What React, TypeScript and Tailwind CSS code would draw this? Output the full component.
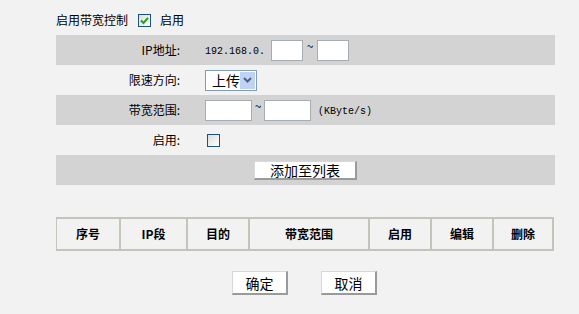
import React from "react";

const cjk = { fontFamily: '"Noto Sans CJK SC", "Liberation Sans", sans-serif' };
const mono = { fontFamily: '"Liberation Mono", "Noto Sans CJK SC", monospace' };

const Check = ({ checked }: { checked?: boolean }) => (
    <span className="w-[13px] h-[13px] border border-[#1c5180] bg-gradient-to-br from-[#dcdcd7] to-white flex items-center justify-center">
        {checked && (
            <svg width="9" height="9" viewBox="0 0 9 9">
                <path d="M1 4.5 L3.5 7 L8 1.8" stroke="#21a121" strokeWidth="2" fill="none" />
            </svg>
        )}
    </span>
);

const TextBox = ({ w }: { w: string }) => (
    <span className={`${w} h-[21px] bg-white border border-[#a5acb2] inline-block`} />
);

const Row = ({ label, gray, children }: { label: string; gray?: boolean; children: React.ReactNode }) => (
    <div className={`h-[30px] flex items-center ${gray ? "bg-[#d3d3d3]" : ""}`}>
        <div className="w-[124px] text-right text-[12px] text-black">{label}</div>
        <div className="ml-[25px] flex items-center">{children}</div>
    </div>
);

const Btn = ({ label, w }: { label: string; w: string }) => (
    <button className={`${w} bg-white border border-[#d8d8d8] border-r-2 border-b-2 border-r-[#9a9a9a] border-b-[#9a9a9a] text-[14px] text-black leading-none flex items-center justify-center`}>
        {label}
    </button>
);

const cols = [
    { t: "序号", w: "w-[63px]" },
    { t: "IP段", w: "w-[67px]" },
    { t: "目的", w: "w-[62px]" },
    { t: "带宽范围", w: "w-[120px]" },
    { t: "启用", w: "w-[62px]" },
    { t: "编辑", w: "w-[62px]" },
    { t: "删除", w: "w-[62px]" },
];

export default function App() {
    return (
        <div className="w-[579px] h-[314px] bg-[#f2f2f2] overflow-hidden" style={cjk}>
            <div className="ml-[56px] w-[499px] pt-[8px]">
                <div className="h-[24px] mb-[3px] flex items-center text-[12px] text-black">
                    <span>启用带宽控制</span>
                    <span className="ml-[10px]"><Check checked /></span>
                    <span className="ml-[9px]">启用</span>
                </div>

                <Row label="IP地址:" gray>
                    <span className="text-[10px] mt-[3px] mr-[6px]" style={mono}>192.168.0.</span>
                    <TextBox w="w-[32px]" />
                    <span className="w-[14px] text-[12px] text-center -mt-[8px]">~</span>
                    <TextBox w="w-[32px]" />
                </Row>

                <Row label="限速方向:">
                    <span className="w-[52px] h-[21px] bg-white border border-[#7f9db9] flex items-center justify-between">
                        <span className="text-[14px] pl-[6px] leading-none">上传</span>
                        <span className="w-[15px] h-[17px] mr-[1px] bg-[#c1d3f5] flex items-center justify-center">
                            <svg width="9" height="6" viewBox="0 0 9 6">
                                <path d="M1 1 L4.5 4.5 L8 1" stroke="#4d6185" strokeWidth="2" fill="none" />
                            </svg>
                        </span>
                    </span>
                </Row>

                <Row label="带宽范围:" gray>
                    <TextBox w="w-[47px]" />
                    <span className="w-[12px] text-[12px] text-center -mt-[8px]">~</span>
                    <TextBox w="w-[47px]" />
                    <span className="ml-[7px] text-[10px] mt-[3px]" style={mono}>(KByte/s)</span>
                </Row>

                <Row label="启用:">
                    <span className="ml-[2px]"><Check /></span>
                </Row>

                <div className="h-[30px] bg-[#d3d3d3] flex items-center justify-center">
                    <span className="w-[103px] h-[19px] bg-white border border-[#d8d8d8] border-r-2 border-b-2 border-r-[#9a9a9a] border-b-[#9a9a9a] text-[14px] flex items-center justify-center leading-none">
                        添加至列表
                    </span>
                </div>

                <div className="mt-[32px] w-[498px] h-[34px] flex border-t-2 border-b-2 border-[#c4c4bc]">
                    {cols.map((c, i) => (
                        <div
                            key={c.t}
                            className={`${c.w} flex items-center justify-center text-[12px] font-bold text-black border-[#c4c4bc] ${i === 0 ? "border-l" : "border-l-2"} ${i === cols.length - 1 ? "border-r-2" : ""}`}
                        >
                            {c.t}
                        </div>
                    ))}
                </div>

                <div className="mt-[20px] flex justify-center gap-[33px] pr-[2px]">
                    <Btn label="确定" w="w-[56px] h-[24px]" />
                    <Btn label="取消" w="w-[56px] h-[24px]" />
                </div>
            </div>
        </div>
    );
}
